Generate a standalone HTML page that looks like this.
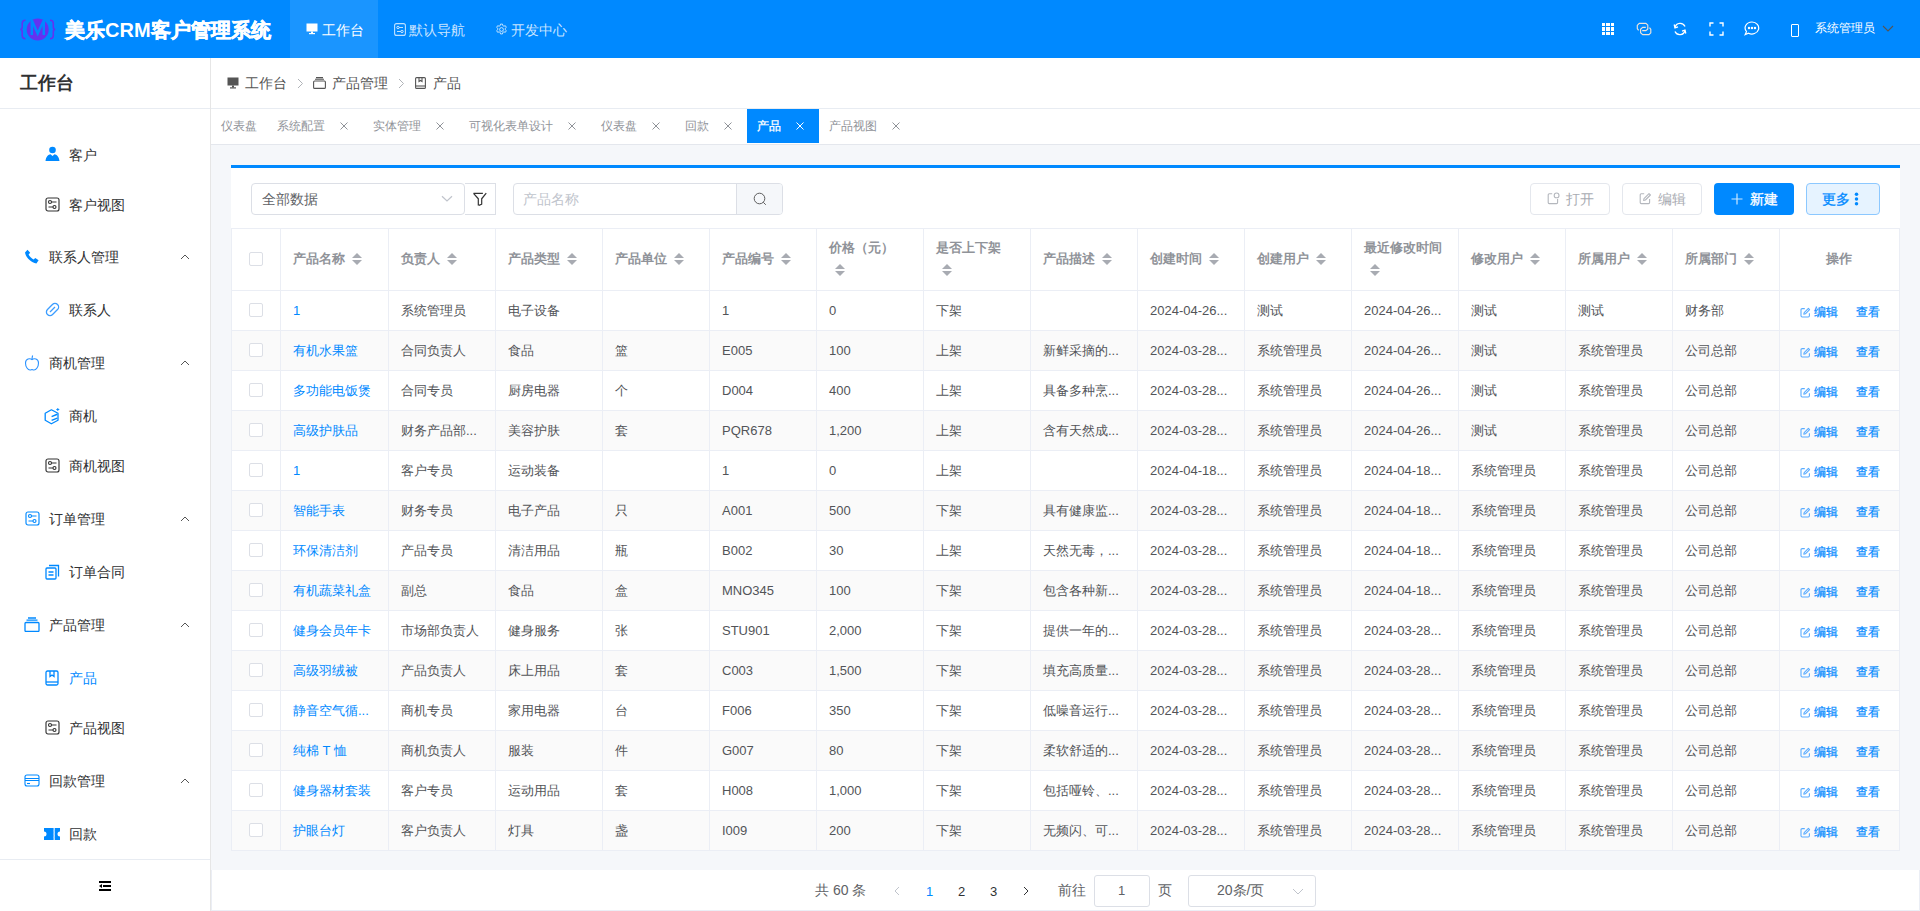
<!DOCTYPE html><html><head><meta charset="utf-8"><style>
*{box-sizing:border-box;margin:0;padding:0}
html,body{width:1920px;height:911px;overflow:hidden;background:#f5f7fa;font-family:"Liberation Sans",sans-serif;color:#606266}
.abs{position:absolute}
.t{position:absolute;white-space:nowrap;line-height:1}
#hdr{position:absolute;left:0;top:0;width:1920px;height:58px;background:#0089ff}
#side{position:absolute;left:0;top:58px;width:211px;height:853px;background:#fff;border-right:1px solid #e6e6e6}
.line{position:absolute;background:#ebeef5}
.sort{position:absolute;width:10px;height:14px}
.sort:before{content:"";position:absolute;left:0;top:0;border-left:5px solid transparent;border-right:5px solid transparent;border-bottom:5px solid #a8abb2}
.sort:after{content:"";position:absolute;left:0;top:7px;border-left:5px solid transparent;border-right:5px solid transparent;border-top:5px solid #a8abb2}
.cb{position:absolute;width:14px;height:14px;border:1px solid #dcdfe6;border-radius:2px;background:#fff}
</style></head><body>

<div id="hdr">
<svg class="abs" style="left:0;top:0" width="60" height="58" viewBox="0 0 60 58">
<circle cx="37.7" cy="29.5" r="11" fill="#6432f0"/>
<path d="M31.8 35V20.3L37.7 33.5L43.8 20.3V35" stroke="#0089ff" stroke-width="2.5" fill="none" stroke-linejoin="miter"/>
<path d="M25.5 20.2Q22.2 20.2 22.2 23.2V27.3Q22.2 29.5 20.2 29.5Q22.2 29.5 22.2 31.7V35.8Q22.2 38.7 25.5 38.7" stroke="#6432f0" stroke-width="1.6" fill="none"/>
<path d="M50 20.2Q53.3 20.2 53.3 23.2V27.3Q53.3 29.5 55.3 29.5Q53.3 29.5 53.3 31.7V35.8Q53.3 38.7 50 38.7" stroke="#6432f0" stroke-width="1.6" fill="none"/>
</svg>
<div class="t" style="left:65px;top:20px;font-size:20px;font-weight:bold;color:#fff"><span style="-webkit-text-stroke:0.6px #fff">美乐</span>CRM<span style="-webkit-text-stroke:0.6px #fff">客户管理系统</span></div>
<div class="abs" style="left:290px;top:0;width:88px;height:58px;background:rgba(255,255,255,.1)"></div>
<svg class="abs" style="left:306px;top:23px" width="12" height="12" viewBox="0 0 12 12"><rect x="0.5" y="0.5" width="11" height="8" fill="#fff"/><rect x="5" y="8.5" width="2" height="2" fill="#fff"/><rect x="3" y="10" width="6" height="1.2" fill="#fff"/></svg>
<div class="t" style="left:322px;top:23px;font-size:14px;color:#fff">工作台</div>
<svg class="abs" style="left:394px;top:23px" width="12" height="13" viewBox="0 0 12 13"><rect x="0.6" y="0.6" width="10.8" height="11.8" rx="2" fill="none" stroke="rgba(255,255,255,.75)" stroke-width="1.1"/><circle cx="4" cy="4.5" r="1.2" fill="none" stroke="rgba(255,255,255,.75)"/><circle cx="8" cy="8.5" r="1.2" fill="none" stroke="rgba(255,255,255,.75)"/><path d="M5.3 4.5H9M3 8.5H6.7" stroke="rgba(255,255,255,.75)"/></svg>
<div class="t" style="left:409px;top:23px;font-size:14px;color:rgba(255,255,255,.78)">默认导航</div>
<svg class="abs" style="left:495px;top:23px" width="13" height="13" viewBox="0 0 24 24"><path d="M12 8.5a3.5 3.5 0 1 0 0 7a3.5 3.5 0 0 0 0-7z M10.2 2h3.6l.6 2.8 2 1.1 2.7-.9 1.8 3.1-2.1 1.9v2.2l2.1 1.9-1.8 3.1-2.7-.9-2 1.1-.6 2.8h-3.6l-.6-2.8-2-1.1-2.7.9-1.8-3.1 2.1-1.9v-2.2L3.1 8.1l1.8-3.1 2.7.9 2-1.1z" fill="none" stroke="rgba(255,255,255,.75)" stroke-width="1.8" stroke-linejoin="round"/></svg>
<div class="t" style="left:511px;top:23px;font-size:14px;color:rgba(255,255,255,.78)">开发中心</div>
<svg class="abs" style="left:1602px;top:23px" width="12" height="12" viewBox="0 0 12 12" fill="#fff" shape-rendering="crispEdges"><rect x="0" y="0" width="3" height="3"/><rect x="4" y="0" width="4" height="3"/><rect x="9" y="0" width="3" height="3"/><rect x="0" y="4" width="3" height="4"/><rect x="4" y="4" width="4" height="4"/><rect x="9" y="4" width="3" height="4"/><rect x="0" y="9" width="3" height="3"/><rect x="4" y="9" width="4" height="3"/><rect x="9" y="9" width="3" height="3"/></svg>
<svg class="abs" style="left:1632px;top:18px" width="24" height="22" viewBox="0 0 24 22" fill="none" stroke="#ece4dc" stroke-width="1.15" stroke-linejoin="round"><path d="M6.6 12.4L5.3 10.6V7.3L7.2 5.4H14L15.8 7.2V11L14 12.6H10.2"/><path d="M13.8 9.4H10.6L8.6 11.2V14.8L10.6 16.6H17L18.8 14.8V11.3L17.5 9.6"/></svg>
<svg class="abs" style="left:1673px;top:22px" width="14" height="14" viewBox="0 0 14 14" fill="none" stroke="#fff" stroke-width="1.3"><path d="M2 5.5A5.3 5.3 0 0 1 12 4.5"/><path d="M12 8.5A5.3 5.3 0 0 1 2 9.5"/><path d="M1.2 2.5L2 5.8L5 4.8" /><path d="M12.8 11.5L12 8.2L9 9.2"/></svg>
<svg class="abs" style="left:1709px;top:22px" width="15" height="14" viewBox="0 0 15 14" fill="none" stroke="#fff" stroke-width="1.4"><path d="M1 4.5V1H4.5M10.5 1H14V4.5M14 9.5V13H10.5M4.5 13H1V9.5"/></svg>
<svg class="abs" style="left:1744px;top:21px" width="16" height="15" viewBox="0 0 16 15" fill="none" stroke="#fff" stroke-width="1.2"><path d="M8 1A6.8 6 0 1 1 4.5 12.2L1.2 13.6L2.5 10.6A6.8 6 0 0 1 8 1z"/><circle cx="5" cy="7" r=".6" fill="#fff"/><circle cx="8" cy="7" r=".6" fill="#fff"/><circle cx="11" cy="7" r=".6" fill="#fff"/></svg>
<div class="abs" style="left:1791px;top:24px;width:8px;height:13px;border:1.3px solid #fff;border-radius:1px"></div>
<div class="t" style="left:1815px;top:22px;font-size:12px;color:#fff">系统管理员</div>
<svg class="abs" style="left:1882px;top:25px" width="12" height="8" viewBox="0 0 12 8" fill="none" stroke="#555" stroke-width="1.1"><path d="M1 1L6 6L11 1"/></svg>
</div>
<div id="side">
<div class="t" style="left:20px;top:16px;font-size:18px;font-weight:bold;color:#303133">工作台</div>
<div class="abs" style="left:0;top:50px;width:210px;height:1px;background:#e8ecf2"></div>
<div class="abs" style="left:0;top:801px;width:210px;height:1px;background:#e8ecf2"></div>
<svg class="abs" style="left:99px;top:823px" width="12" height="10" viewBox="0 0 12 10" fill="#000"><rect x="0" y="0" width="12" height="2"/><rect x="4" y="4" width="8" height="2"/><rect x="0" y="8" width="12" height="2"/><path d="M0 5L3 3V7z"/></svg>
</div>
<svg class="abs" style="left:45px;top:146px" width="15" height="15" viewBox="0 0 15 15" fill="#0089ff"><circle cx="7.5" cy="4" r="3.3"/><path d="M0.5 15C1 10.5 3.5 8.5 5.5 8.3L7.5 10L9.5 8.3C11.5 8.5 14 10.5 14.5 15z"/></svg>
<div class="t" style="left:69px;top:148px;font-size:14px;color:#303133">客户</div>
<svg class="abs" style="left:45px;top:197px" width="15" height="15" viewBox="0 0 15 15" fill="none" stroke="#333" stroke-width="1.15"><rect x="1" y="1" width="13" height="13" rx="2"/><circle cx="5" cy="5" r="1.5"/><circle cx="9.5" cy="10" r="1.5"/><path d="M6.5 5H11.5M3.5 10H8"/></svg>
<div class="t" style="left:69px;top:198px;font-size:14px;color:#303133">客户视图</div>
<svg class="abs" style="left:24px;top:249px" width="16" height="15" viewBox="0 0 16 15" fill="#0089ff"><path d="M1 3.5L3.5 0.8L6.2 3.7L4.6 5.6C5.6 7.6 7.4 9.4 9.6 10.6L11.3 8.9L14.6 11.3L12.4 14.5C7 13.5 1.8 8.6 1 3.5z"/></svg>
<div class="t" style="left:49px;top:250px;font-size:14px;color:#303133">联系人管理</div>
<svg class="abs" style="left:180px;top:254px" width="10" height="6" viewBox="0 0 10 6" fill="none" stroke="#555" stroke-width="1"><path d="M1 5L5 1L9 5"/></svg>
<svg class="abs" style="left:45px;top:302px" width="15" height="15" viewBox="0 0 15 15" fill="none" stroke="#3c9dff" stroke-width="1.3"><rect x="0.4" y="3.9" width="14.2" height="7.2" rx="3.6" transform="rotate(-45 7.5 7.5)"/><path d="M5 10L10 5"/></svg>
<div class="t" style="left:69px;top:303px;font-size:14px;color:#303133">联系人</div>
<svg class="abs" style="left:24px;top:355px" width="16" height="16" viewBox="0 0 16 16" fill="none" stroke="#2a92ff" stroke-width="1.1"><path d="M8 4.5C6 3 1.5 3.5 1.5 8C1.5 12 4 15 6 15C7 15 7.3 14.6 8 14.6C8.7 14.6 9 15 10 15C12 15 14.5 12 14.5 8C14.5 3.5 10 3 8 4.5z"/><path d="M8 4.5C8 3 8.3 1.5 8.6 0.5"/></svg>
<div class="t" style="left:49px;top:356px;font-size:14px;color:#303133">商机管理</div>
<svg class="abs" style="left:180px;top:360px" width="10" height="6" viewBox="0 0 10 6" fill="none" stroke="#555" stroke-width="1"><path d="M1 5L5 1L9 5"/></svg>
<svg class="abs" style="left:44px;top:408px" width="17" height="17" viewBox="0 0 17 17" fill="none" stroke="#0089ff" stroke-width="1.3"><path d="M7.4 1.8L14 5.3V12.3L7.4 15.8L1.2 12.3V5.3z" stroke-linejoin="round"/><path d="M7.6 8.6L13.3 6.3M7.6 12.4L13.3 10.1" stroke-width="1.5"/><path d="M13.8 0V3M12.3 1.5H15.3" stroke-width="0.9"/></svg>
<div class="t" style="left:69px;top:409px;font-size:14px;color:#303133">商机</div>
<svg class="abs" style="left:45px;top:458px" width="15" height="15" viewBox="0 0 15 15" fill="none" stroke="#333" stroke-width="1.15"><rect x="1" y="1" width="13" height="13" rx="2"/><circle cx="5" cy="5" r="1.5"/><circle cx="9.5" cy="10" r="1.5"/><path d="M6.5 5H11.5M3.5 10H8"/></svg>
<div class="t" style="left:69px;top:459px;font-size:14px;color:#303133">商机视图</div>
<svg class="abs" style="left:25px;top:511px" width="15" height="15" viewBox="0 0 15 15" fill="none" stroke="#0089ff" stroke-width="1.15"><rect x="1" y="1" width="13" height="13" rx="2"/><circle cx="5" cy="5" r="1.5"/><circle cx="9.5" cy="10" r="1.5"/><path d="M6.5 5H11.5M3.5 10H8"/></svg>
<div class="t" style="left:49px;top:512px;font-size:14px;color:#303133">订单管理</div>
<svg class="abs" style="left:180px;top:516px" width="10" height="6" viewBox="0 0 10 6" fill="none" stroke="#555" stroke-width="1"><path d="M1 5L5 1L9 5"/></svg>
<svg class="abs" style="left:45px;top:564px" width="15" height="16" viewBox="0 0 15 16" fill="none" stroke="#0089ff" stroke-width="1.3"><rect x="1" y="4" width="10" height="11" rx="1"/><path d="M4 1.5H13.5V12.5"/><path d="M3.5 8H8.5M3.5 11H8.5"/></svg>
<div class="t" style="left:69px;top:565px;font-size:14px;color:#303133">订单合同</div>
<svg class="abs" style="left:24px;top:617px" width="16" height="15" viewBox="0 0 16 15" fill="none" stroke="#0089ff" stroke-width="1.3"><rect x="1" y="5.5" width="14" height="9" rx="1"/><path d="M2.5 3.2H13.5M4 1H12"/></svg>
<div class="t" style="left:49px;top:618px;font-size:14px;color:#303133">产品管理</div>
<svg class="abs" style="left:180px;top:622px" width="10" height="6" viewBox="0 0 10 6" fill="none" stroke="#555" stroke-width="1"><path d="M1 5L5 1L9 5"/></svg>
<svg class="abs" style="left:45px;top:670px" width="14" height="16" viewBox="0 0 14 16" fill="none" stroke="#0089ff" stroke-width="1.3"><rect x="1" y="1" width="12" height="14" rx="1.5"/><path d="M1 12H13"/><path d="M5 1V6.5L7 5L9 6.5V1"/></svg>
<div class="t" style="left:69px;top:671px;font-size:14px;color:#0089ff">产品</div>
<svg class="abs" style="left:45px;top:720px" width="15" height="15" viewBox="0 0 15 15" fill="none" stroke="#333" stroke-width="1.15"><rect x="1" y="1" width="13" height="13" rx="2"/><circle cx="5" cy="5" r="1.5"/><circle cx="9.5" cy="10" r="1.5"/><path d="M6.5 5H11.5M3.5 10H8"/></svg>
<div class="t" style="left:69px;top:721px;font-size:14px;color:#303133">产品视图</div>
<svg class="abs" style="left:24px;top:774px" width="16" height="13" viewBox="0 0 16 13" fill="none" stroke="#0089ff" stroke-width="1.1"><rect x="1" y="1" width="14" height="11" rx="2"/><path d="M1 4.5H15M1 6.5H15"/><path d="M3 9.5H6"/></svg>
<div class="t" style="left:49px;top:774px;font-size:14px;color:#303133">回款管理</div>
<svg class="abs" style="left:180px;top:778px" width="10" height="6" viewBox="0 0 10 6" fill="none" stroke="#555" stroke-width="1"><path d="M1 5L5 1L9 5"/></svg>
<svg class="abs" style="left:44px;top:828px" width="16" height="12" viewBox="0 0 16 12" fill="#0089ff"><path d="M0 0H16V3.5A2.5 2.5 0 0 0 16 8.5V12H0V8.5A2.5 2.5 0 0 0 0 3.5z"/><rect x="9.6" y="0" width="1.1" height="12" fill="#fff"/><rect x="9.6" y="2" width="1.1" height="1.5" fill="#9ccfff"/><rect x="9.6" y="5.3" width="1.1" height="1.5" fill="#9ccfff"/><rect x="9.6" y="8.6" width="1.1" height="1.5" fill="#9ccfff"/></svg>
<div class="t" style="left:69px;top:827px;font-size:14px;color:#303133">回款</div>
<div class="abs" style="left:211px;top:58px;width:1709px;height:51px;background:#fff;border-bottom:1px solid #e8ecf2"></div>
<svg class="abs" style="left:227px;top:77px" width="12" height="12" viewBox="0 0 12 12" fill="#555"><rect x="0.5" y="0.5" width="11" height="8"/><rect x="5" y="8.5" width="2" height="2"/><rect x="3" y="10.3" width="6" height="1.2"/></svg>
<div class="t" style="left:245px;top:76px;font-size:14px;color:#555">工作台</div>
<svg class="abs" style="left:297px;top:78px" width="7" height="11" viewBox="0 0 7 11" fill="none" stroke="#b0b3b8" stroke-width="1"><path d="M1 1L5.5 5.5L1 10"/></svg>
<svg class="abs" style="left:313px;top:77px" width="13" height="12" viewBox="0 0 13 12" fill="none" stroke="#555" stroke-width="1.1"><rect x="0.6" y="4" width="11.8" height="7.4" rx="1"/><path d="M2 2.2H11M3 0.6H10"/></svg>
<div class="t" style="left:332px;top:76px;font-size:14px;color:#555">产品管理</div>
<svg class="abs" style="left:398px;top:78px" width="7" height="11" viewBox="0 0 7 11" fill="none" stroke="#b0b3b8" stroke-width="1"><path d="M1 1L5.5 5.5L1 10"/></svg>
<svg class="abs" style="left:415px;top:77px" width="11" height="12" viewBox="0 0 11 12" fill="none" stroke="#555" stroke-width="1.1"><rect x="0.6" y="0.6" width="9.8" height="10.8" rx="1"/><path d="M0.6 9H10.4"/><path d="M4 0.6V4.5L5.5 3.5L7 4.5V0.6"/></svg>
<div class="t" style="left:433px;top:76px;font-size:14px;color:#555">产品</div>
<div class="abs" style="left:211px;top:109px;width:1709px;height:36px;background:#fff;border-bottom:1px solid #e4e7ed"></div>
<div class="abs" style="left:747px;top:109px;width:72px;height:34px;background:#0089ff"></div>
<div class="t" style="left:221px;top:120px;font-size:12px;color:#909399">仪表盘</div>
<div class="t" style="left:277px;top:120px;font-size:12px;color:#909399">系统配置</div>
<svg class="abs" style="left:340px;top:122px" width="8" height="8" viewBox="0 0 8 8" fill="none" stroke="#909399" stroke-width="1"><path d="M0.5 0.5L7.5 7.5M7.5 0.5L0.5 7.5"/></svg>
<div class="t" style="left:373px;top:120px;font-size:12px;color:#909399">实体管理</div>
<svg class="abs" style="left:436px;top:122px" width="8" height="8" viewBox="0 0 8 8" fill="none" stroke="#909399" stroke-width="1"><path d="M0.5 0.5L7.5 7.5M7.5 0.5L0.5 7.5"/></svg>
<div class="t" style="left:469px;top:120px;font-size:12px;color:#909399">可视化表单设计</div>
<svg class="abs" style="left:568px;top:122px" width="8" height="8" viewBox="0 0 8 8" fill="none" stroke="#909399" stroke-width="1"><path d="M0.5 0.5L7.5 7.5M7.5 0.5L0.5 7.5"/></svg>
<div class="t" style="left:601px;top:120px;font-size:12px;color:#909399">仪表盘</div>
<svg class="abs" style="left:652px;top:122px" width="8" height="8" viewBox="0 0 8 8" fill="none" stroke="#909399" stroke-width="1"><path d="M0.5 0.5L7.5 7.5M7.5 0.5L0.5 7.5"/></svg>
<div class="t" style="left:685px;top:120px;font-size:12px;color:#909399">回款</div>
<svg class="abs" style="left:724px;top:122px" width="8" height="8" viewBox="0 0 8 8" fill="none" stroke="#909399" stroke-width="1"><path d="M0.5 0.5L7.5 7.5M7.5 0.5L0.5 7.5"/></svg>
<div class="t" style="left:757px;top:120px;font-size:12px;color:#fff;-webkit-text-stroke:0.3px #fff">产品</div>
<svg class="abs" style="left:796px;top:122px" width="8" height="8" viewBox="0 0 8 8" fill="none" stroke="#fff" stroke-width="1"><path d="M0.5 0.5L7.5 7.5M7.5 0.5L0.5 7.5"/></svg>
<div class="t" style="left:829px;top:120px;font-size:12px;color:#909399">产品视图</div>
<svg class="abs" style="left:892px;top:122px" width="8" height="8" viewBox="0 0 8 8" fill="none" stroke="#909399" stroke-width="1"><path d="M0.5 0.5L7.5 7.5M7.5 0.5L0.5 7.5"/></svg>
<div class="abs" style="left:231px;top:165px;width:1669px;height:686px;background:#fff;border-top:3px solid #0089ff"></div>
<div class="abs" style="left:251px;top:183px;width:214px;height:32px;border:1px solid #dcdfe6;border-radius:4px;background:#fff"></div>
<div class="t" style="left:262px;top:192px;font-size:14px;color:#606266">全部数据</div>
<svg class="abs" style="left:441px;top:195px" width="12" height="8" viewBox="0 0 12 8" fill="none" stroke="#c0c4cc" stroke-width="1.2"><path d="M1 1.2L6 6L11 1.2"/></svg>
<div class="abs" style="left:465px;top:183px;width:31px;height:32px;border:1px solid #dcdfe6;border-left:none;background:#fff"></div>
<svg class="abs" style="left:472px;top:192px" width="16" height="16" viewBox="0 0 16 16" fill="none" stroke="#333" stroke-width="1.2" stroke-linejoin="round"><path d="M1.5 1.3H10.9M14.25 1.1L9.7 6.75V12.2L6.75 13.4M1.5 1.3L6.3 6.75V13.4"/></svg>
<div class="abs" style="left:513px;top:183px;width:270px;height:32px;border:1px solid #dcdfe6;border-radius:4px;background:#fff"></div>
<div class="abs" style="left:736px;top:184px;width:46px;height:30px;border-left:1px solid #dcdfe6;background:#f5f7fa;border-radius:0 3px 3px 0"></div>
<div class="t" style="left:523px;top:192px;font-size:14px;color:#c0c4cc">产品名称</div>
<svg class="abs" style="left:753px;top:192px" width="14" height="14" viewBox="0 0 14 14" fill="none" stroke="#555" stroke-width="0.95"><circle cx="6.5" cy="6.5" r="5.3"/><path d="M10.3 10.3L12.8 12.8"/></svg>
<div class="abs" style="left:1530px;top:183px;width:80px;height:32px;border:1px solid #e4e7ed;border-radius:4px;background:#fff"></div>
<svg class="abs" style="left:1547px;top:192px" width="13" height="13" viewBox="0 0 13 13" fill="none" stroke="#b4b7bd" stroke-width="1.1"><path d="M5.2 1.8H2.2Q1.2 1.8 1.2 2.8V10.6Q1.2 11.6 2.2 11.6H9.6Q10.6 11.6 10.6 10.6V7"/><circle cx="9.6" cy="3.4" r="2.4"/></svg>
<div class="t" style="left:1566px;top:192px;font-size:14px;color:#a8abb2">打开</div>
<div class="abs" style="left:1622px;top:183px;width:80px;height:32px;border:1px solid #e4e7ed;border-radius:4px;background:#fff"></div>
<svg class="abs" style="left:1639px;top:192px" width="13" height="13" viewBox="0 0 13 13" fill="none" stroke="#b4b7bd" stroke-width="1.1"><path d="M5.2 1.8H2.2Q1.2 1.8 1.2 2.8V10.6Q1.2 11.6 2.2 11.6H9.6Q10.6 11.6 10.6 10.6V7"/><path d="M4.6 8.4L5 6.6L10 1.6L11.4 3L6.4 8z" stroke-linejoin="round"/></svg>
<div class="t" style="left:1658px;top:192px;font-size:14px;color:#a8abb2">编辑</div>
<div class="abs" style="left:1714px;top:183px;width:80px;height:32px;border-radius:4px;background:#0089ff"></div>
<svg class="abs" style="left:1731px;top:193px" width="12" height="12" viewBox="0 0 12 12" fill="none" stroke="rgba(255,255,255,.8)" stroke-width="1.2"><path d="M6 0.5V11.5M0.5 6H11.5"/></svg>
<div class="t" style="left:1750px;top:192px;font-size:14px;color:#fff;-webkit-text-stroke:0.35px #fff">新建</div>
<div class="abs" style="left:1806px;top:183px;width:74px;height:32px;border:1px solid #8cc8ff;border-radius:4px;background:#e6f3ff"></div>
<div class="t" style="left:1822px;top:192px;font-size:14px;color:#0089ff;-webkit-text-stroke:0.3px #0089ff">更多</div>
<svg class="abs" style="left:1854px;top:192px" width="5" height="14" viewBox="0 0 5 14" fill="#0089ff"><circle cx="2.5" cy="2.3" r="1.75"/><circle cx="2.5" cy="7" r="1.75"/><circle cx="2.5" cy="11.7" r="1.75"/></svg>
<div class="abs" style="left:232px;top:291px;width:1667px;height:39px;background:#fff"></div>
<div class="abs" style="left:232px;top:331px;width:1667px;height:39px;background:#fafafa"></div>
<div class="abs" style="left:232px;top:371px;width:1667px;height:39px;background:#fff"></div>
<div class="abs" style="left:232px;top:411px;width:1667px;height:39px;background:#fafafa"></div>
<div class="abs" style="left:232px;top:451px;width:1667px;height:39px;background:#fff"></div>
<div class="abs" style="left:232px;top:491px;width:1667px;height:39px;background:#fafafa"></div>
<div class="abs" style="left:232px;top:531px;width:1667px;height:39px;background:#fff"></div>
<div class="abs" style="left:232px;top:571px;width:1667px;height:39px;background:#fafafa"></div>
<div class="abs" style="left:232px;top:611px;width:1667px;height:39px;background:#fff"></div>
<div class="abs" style="left:232px;top:651px;width:1667px;height:39px;background:#fafafa"></div>
<div class="abs" style="left:232px;top:691px;width:1667px;height:39px;background:#fff"></div>
<div class="abs" style="left:232px;top:731px;width:1667px;height:39px;background:#fafafa"></div>
<div class="abs" style="left:232px;top:771px;width:1667px;height:39px;background:#fff"></div>
<div class="abs" style="left:232px;top:811px;width:1667px;height:39px;background:#fafafa"></div>
<div class="line" style="left:231px;top:228px;width:1669px;height:1px"></div>
<div class="line" style="left:231px;top:290px;width:1669px;height:1px"></div>
<div class="line" style="left:231px;top:330px;width:1669px;height:1px"></div>
<div class="line" style="left:231px;top:370px;width:1669px;height:1px"></div>
<div class="line" style="left:231px;top:410px;width:1669px;height:1px"></div>
<div class="line" style="left:231px;top:450px;width:1669px;height:1px"></div>
<div class="line" style="left:231px;top:490px;width:1669px;height:1px"></div>
<div class="line" style="left:231px;top:530px;width:1669px;height:1px"></div>
<div class="line" style="left:231px;top:570px;width:1669px;height:1px"></div>
<div class="line" style="left:231px;top:610px;width:1669px;height:1px"></div>
<div class="line" style="left:231px;top:650px;width:1669px;height:1px"></div>
<div class="line" style="left:231px;top:690px;width:1669px;height:1px"></div>
<div class="line" style="left:231px;top:730px;width:1669px;height:1px"></div>
<div class="line" style="left:231px;top:770px;width:1669px;height:1px"></div>
<div class="line" style="left:231px;top:810px;width:1669px;height:1px"></div>
<div class="line" style="left:231px;top:850px;width:1669px;height:1px"></div>
<div class="line" style="left:231px;top:228px;width:1px;height:623px"></div>
<div class="line" style="left:280px;top:228px;width:1px;height:623px"></div>
<div class="line" style="left:388px;top:228px;width:1px;height:623px"></div>
<div class="line" style="left:495px;top:228px;width:1px;height:623px"></div>
<div class="line" style="left:602px;top:228px;width:1px;height:623px"></div>
<div class="line" style="left:709px;top:228px;width:1px;height:623px"></div>
<div class="line" style="left:816px;top:228px;width:1px;height:623px"></div>
<div class="line" style="left:923px;top:228px;width:1px;height:623px"></div>
<div class="line" style="left:1030px;top:228px;width:1px;height:623px"></div>
<div class="line" style="left:1137px;top:228px;width:1px;height:623px"></div>
<div class="line" style="left:1244px;top:228px;width:1px;height:623px"></div>
<div class="line" style="left:1351px;top:228px;width:1px;height:623px"></div>
<div class="line" style="left:1458px;top:228px;width:1px;height:623px"></div>
<div class="line" style="left:1565px;top:228px;width:1px;height:623px"></div>
<div class="line" style="left:1672px;top:228px;width:1px;height:623px"></div>
<div class="line" style="left:1779px;top:228px;width:1px;height:623px"></div>
<div class="line" style="left:1899px;top:228px;width:1px;height:623px"></div>
<div class="cb" style="left:249px;top:252px"></div>
<div class="t" style="left:293px;top:252px;font-size:13px;font-weight:bold;color:#909399">产品名称</div>
<i class="sort" style="left:352px;top:253px"></i>
<div class="t" style="left:401px;top:252px;font-size:13px;font-weight:bold;color:#909399">负责人</div>
<i class="sort" style="left:447px;top:253px"></i>
<div class="t" style="left:508px;top:252px;font-size:13px;font-weight:bold;color:#909399">产品类型</div>
<i class="sort" style="left:567px;top:253px"></i>
<div class="t" style="left:615px;top:252px;font-size:13px;font-weight:bold;color:#909399">产品单位</div>
<i class="sort" style="left:674px;top:253px"></i>
<div class="t" style="left:722px;top:252px;font-size:13px;font-weight:bold;color:#909399">产品编号</div>
<i class="sort" style="left:781px;top:253px"></i>
<div class="t" style="left:829px;top:241px;font-size:13px;font-weight:bold;color:#909399">价格（元）</div>
<i class="sort" style="left:835px;top:264px"></i>
<div class="t" style="left:936px;top:241px;font-size:13px;font-weight:bold;color:#909399">是否上下架</div>
<i class="sort" style="left:942px;top:264px"></i>
<div class="t" style="left:1043px;top:252px;font-size:13px;font-weight:bold;color:#909399">产品描述</div>
<i class="sort" style="left:1102px;top:253px"></i>
<div class="t" style="left:1150px;top:252px;font-size:13px;font-weight:bold;color:#909399">创建时间</div>
<i class="sort" style="left:1209px;top:253px"></i>
<div class="t" style="left:1257px;top:252px;font-size:13px;font-weight:bold;color:#909399">创建用户</div>
<i class="sort" style="left:1316px;top:253px"></i>
<div class="t" style="left:1364px;top:241px;font-size:13px;font-weight:bold;color:#909399">最近修改时间</div>
<i class="sort" style="left:1370px;top:264px"></i>
<div class="t" style="left:1471px;top:252px;font-size:13px;font-weight:bold;color:#909399">修改用户</div>
<i class="sort" style="left:1530px;top:253px"></i>
<div class="t" style="left:1578px;top:252px;font-size:13px;font-weight:bold;color:#909399">所属用户</div>
<i class="sort" style="left:1637px;top:253px"></i>
<div class="t" style="left:1685px;top:252px;font-size:13px;font-weight:bold;color:#909399">所属部门</div>
<i class="sort" style="left:1744px;top:253px"></i>
<div class="t" style="left:1826px;top:252px;font-size:13px;font-weight:bold;color:#909399">操作</div>
<div class="cb" style="left:249px;top:303px"></div>
<div class="t" style="left:293px;top:304px;font-size:13px;color:#0089ff">1</div>
<div class="t" style="left:401px;top:304px;font-size:13px;color:#525458">系统管理员</div>
<div class="t" style="left:508px;top:304px;font-size:13px;color:#525458">电子设备</div>
<div class="t" style="left:722px;top:304px;font-size:13px;color:#525458">1</div>
<div class="t" style="left:829px;top:304px;font-size:13px;color:#525458">0</div>
<div class="t" style="left:936px;top:304px;font-size:13px;color:#525458">下架</div>
<div class="t" style="left:1150px;top:304px;font-size:13px;color:#525458">2024-04-26...</div>
<div class="t" style="left:1257px;top:304px;font-size:13px;color:#525458">测试</div>
<div class="t" style="left:1364px;top:304px;font-size:13px;color:#525458">2024-04-26...</div>
<div class="t" style="left:1471px;top:304px;font-size:13px;color:#525458">测试</div>
<div class="t" style="left:1578px;top:304px;font-size:13px;color:#525458">测试</div>
<div class="t" style="left:1685px;top:304px;font-size:13px;color:#525458">财务部</div>
<svg class="abs" style="left:1800px;top:307px" width="11" height="11" viewBox="0 0 11 11" fill="none" stroke="#5aacff" stroke-width="1.1"><path d="M4.8 1.6H2.2Q1 1.6 1 2.8V8.8Q1 10 2.2 10H8.2Q9.4 10 9.4 8.8V6.2"/><path d="M3.8 7.2L4.2 5.6L8.4 1.4L9.6 2.6L5.4 6.8z" stroke-linejoin="round"/></svg>
<div class="t" style="left:1814px;top:306px;font-size:12px;color:#0089ff;-webkit-text-stroke:0.2px #0089ff">编辑</div>
<div class="t" style="left:1856px;top:306px;font-size:12px;color:#0089ff;-webkit-text-stroke:0.2px #0089ff">查看</div>
<div class="cb" style="left:249px;top:343px"></div>
<div class="t" style="left:293px;top:344px;font-size:13px;color:#0089ff">有机水果篮</div>
<div class="t" style="left:401px;top:344px;font-size:13px;color:#525458">合同负责人</div>
<div class="t" style="left:508px;top:344px;font-size:13px;color:#525458">食品</div>
<div class="t" style="left:615px;top:344px;font-size:13px;color:#525458">篮</div>
<div class="t" style="left:722px;top:344px;font-size:13px;color:#525458">E005</div>
<div class="t" style="left:829px;top:344px;font-size:13px;color:#525458">100</div>
<div class="t" style="left:936px;top:344px;font-size:13px;color:#525458">上架</div>
<div class="t" style="left:1043px;top:344px;font-size:13px;color:#525458">新鲜采摘的...</div>
<div class="t" style="left:1150px;top:344px;font-size:13px;color:#525458">2024-03-28...</div>
<div class="t" style="left:1257px;top:344px;font-size:13px;color:#525458">系统管理员</div>
<div class="t" style="left:1364px;top:344px;font-size:13px;color:#525458">2024-04-26...</div>
<div class="t" style="left:1471px;top:344px;font-size:13px;color:#525458">测试</div>
<div class="t" style="left:1578px;top:344px;font-size:13px;color:#525458">系统管理员</div>
<div class="t" style="left:1685px;top:344px;font-size:13px;color:#525458">公司总部</div>
<svg class="abs" style="left:1800px;top:347px" width="11" height="11" viewBox="0 0 11 11" fill="none" stroke="#5aacff" stroke-width="1.1"><path d="M4.8 1.6H2.2Q1 1.6 1 2.8V8.8Q1 10 2.2 10H8.2Q9.4 10 9.4 8.8V6.2"/><path d="M3.8 7.2L4.2 5.6L8.4 1.4L9.6 2.6L5.4 6.8z" stroke-linejoin="round"/></svg>
<div class="t" style="left:1814px;top:346px;font-size:12px;color:#0089ff;-webkit-text-stroke:0.2px #0089ff">编辑</div>
<div class="t" style="left:1856px;top:346px;font-size:12px;color:#0089ff;-webkit-text-stroke:0.2px #0089ff">查看</div>
<div class="cb" style="left:249px;top:383px"></div>
<div class="t" style="left:293px;top:384px;font-size:13px;color:#0089ff">多功能电饭煲</div>
<div class="t" style="left:401px;top:384px;font-size:13px;color:#525458">合同专员</div>
<div class="t" style="left:508px;top:384px;font-size:13px;color:#525458">厨房电器</div>
<div class="t" style="left:615px;top:384px;font-size:13px;color:#525458">个</div>
<div class="t" style="left:722px;top:384px;font-size:13px;color:#525458">D004</div>
<div class="t" style="left:829px;top:384px;font-size:13px;color:#525458">400</div>
<div class="t" style="left:936px;top:384px;font-size:13px;color:#525458">上架</div>
<div class="t" style="left:1043px;top:384px;font-size:13px;color:#525458">具备多种烹...</div>
<div class="t" style="left:1150px;top:384px;font-size:13px;color:#525458">2024-03-28...</div>
<div class="t" style="left:1257px;top:384px;font-size:13px;color:#525458">系统管理员</div>
<div class="t" style="left:1364px;top:384px;font-size:13px;color:#525458">2024-04-26...</div>
<div class="t" style="left:1471px;top:384px;font-size:13px;color:#525458">测试</div>
<div class="t" style="left:1578px;top:384px;font-size:13px;color:#525458">系统管理员</div>
<div class="t" style="left:1685px;top:384px;font-size:13px;color:#525458">公司总部</div>
<svg class="abs" style="left:1800px;top:387px" width="11" height="11" viewBox="0 0 11 11" fill="none" stroke="#5aacff" stroke-width="1.1"><path d="M4.8 1.6H2.2Q1 1.6 1 2.8V8.8Q1 10 2.2 10H8.2Q9.4 10 9.4 8.8V6.2"/><path d="M3.8 7.2L4.2 5.6L8.4 1.4L9.6 2.6L5.4 6.8z" stroke-linejoin="round"/></svg>
<div class="t" style="left:1814px;top:386px;font-size:12px;color:#0089ff;-webkit-text-stroke:0.2px #0089ff">编辑</div>
<div class="t" style="left:1856px;top:386px;font-size:12px;color:#0089ff;-webkit-text-stroke:0.2px #0089ff">查看</div>
<div class="cb" style="left:249px;top:423px"></div>
<div class="t" style="left:293px;top:424px;font-size:13px;color:#0089ff">高级护肤品</div>
<div class="t" style="left:401px;top:424px;font-size:13px;color:#525458">财务产品部...</div>
<div class="t" style="left:508px;top:424px;font-size:13px;color:#525458">美容护肤</div>
<div class="t" style="left:615px;top:424px;font-size:13px;color:#525458">套</div>
<div class="t" style="left:722px;top:424px;font-size:13px;color:#525458">PQR678</div>
<div class="t" style="left:829px;top:424px;font-size:13px;color:#525458">1,200</div>
<div class="t" style="left:936px;top:424px;font-size:13px;color:#525458">上架</div>
<div class="t" style="left:1043px;top:424px;font-size:13px;color:#525458">含有天然成...</div>
<div class="t" style="left:1150px;top:424px;font-size:13px;color:#525458">2024-03-28...</div>
<div class="t" style="left:1257px;top:424px;font-size:13px;color:#525458">系统管理员</div>
<div class="t" style="left:1364px;top:424px;font-size:13px;color:#525458">2024-04-26...</div>
<div class="t" style="left:1471px;top:424px;font-size:13px;color:#525458">测试</div>
<div class="t" style="left:1578px;top:424px;font-size:13px;color:#525458">系统管理员</div>
<div class="t" style="left:1685px;top:424px;font-size:13px;color:#525458">公司总部</div>
<svg class="abs" style="left:1800px;top:427px" width="11" height="11" viewBox="0 0 11 11" fill="none" stroke="#5aacff" stroke-width="1.1"><path d="M4.8 1.6H2.2Q1 1.6 1 2.8V8.8Q1 10 2.2 10H8.2Q9.4 10 9.4 8.8V6.2"/><path d="M3.8 7.2L4.2 5.6L8.4 1.4L9.6 2.6L5.4 6.8z" stroke-linejoin="round"/></svg>
<div class="t" style="left:1814px;top:426px;font-size:12px;color:#0089ff;-webkit-text-stroke:0.2px #0089ff">编辑</div>
<div class="t" style="left:1856px;top:426px;font-size:12px;color:#0089ff;-webkit-text-stroke:0.2px #0089ff">查看</div>
<div class="cb" style="left:249px;top:463px"></div>
<div class="t" style="left:293px;top:464px;font-size:13px;color:#0089ff">1</div>
<div class="t" style="left:401px;top:464px;font-size:13px;color:#525458">客户专员</div>
<div class="t" style="left:508px;top:464px;font-size:13px;color:#525458">运动装备</div>
<div class="t" style="left:722px;top:464px;font-size:13px;color:#525458">1</div>
<div class="t" style="left:829px;top:464px;font-size:13px;color:#525458">0</div>
<div class="t" style="left:936px;top:464px;font-size:13px;color:#525458">上架</div>
<div class="t" style="left:1150px;top:464px;font-size:13px;color:#525458">2024-04-18...</div>
<div class="t" style="left:1257px;top:464px;font-size:13px;color:#525458">系统管理员</div>
<div class="t" style="left:1364px;top:464px;font-size:13px;color:#525458">2024-04-18...</div>
<div class="t" style="left:1471px;top:464px;font-size:13px;color:#525458">系统管理员</div>
<div class="t" style="left:1578px;top:464px;font-size:13px;color:#525458">系统管理员</div>
<div class="t" style="left:1685px;top:464px;font-size:13px;color:#525458">公司总部</div>
<svg class="abs" style="left:1800px;top:467px" width="11" height="11" viewBox="0 0 11 11" fill="none" stroke="#5aacff" stroke-width="1.1"><path d="M4.8 1.6H2.2Q1 1.6 1 2.8V8.8Q1 10 2.2 10H8.2Q9.4 10 9.4 8.8V6.2"/><path d="M3.8 7.2L4.2 5.6L8.4 1.4L9.6 2.6L5.4 6.8z" stroke-linejoin="round"/></svg>
<div class="t" style="left:1814px;top:466px;font-size:12px;color:#0089ff;-webkit-text-stroke:0.2px #0089ff">编辑</div>
<div class="t" style="left:1856px;top:466px;font-size:12px;color:#0089ff;-webkit-text-stroke:0.2px #0089ff">查看</div>
<div class="cb" style="left:249px;top:503px"></div>
<div class="t" style="left:293px;top:504px;font-size:13px;color:#0089ff">智能手表</div>
<div class="t" style="left:401px;top:504px;font-size:13px;color:#525458">财务专员</div>
<div class="t" style="left:508px;top:504px;font-size:13px;color:#525458">电子产品</div>
<div class="t" style="left:615px;top:504px;font-size:13px;color:#525458">只</div>
<div class="t" style="left:722px;top:504px;font-size:13px;color:#525458">A001</div>
<div class="t" style="left:829px;top:504px;font-size:13px;color:#525458">500</div>
<div class="t" style="left:936px;top:504px;font-size:13px;color:#525458">下架</div>
<div class="t" style="left:1043px;top:504px;font-size:13px;color:#525458">具有健康监...</div>
<div class="t" style="left:1150px;top:504px;font-size:13px;color:#525458">2024-03-28...</div>
<div class="t" style="left:1257px;top:504px;font-size:13px;color:#525458">系统管理员</div>
<div class="t" style="left:1364px;top:504px;font-size:13px;color:#525458">2024-04-18...</div>
<div class="t" style="left:1471px;top:504px;font-size:13px;color:#525458">系统管理员</div>
<div class="t" style="left:1578px;top:504px;font-size:13px;color:#525458">系统管理员</div>
<div class="t" style="left:1685px;top:504px;font-size:13px;color:#525458">公司总部</div>
<svg class="abs" style="left:1800px;top:507px" width="11" height="11" viewBox="0 0 11 11" fill="none" stroke="#5aacff" stroke-width="1.1"><path d="M4.8 1.6H2.2Q1 1.6 1 2.8V8.8Q1 10 2.2 10H8.2Q9.4 10 9.4 8.8V6.2"/><path d="M3.8 7.2L4.2 5.6L8.4 1.4L9.6 2.6L5.4 6.8z" stroke-linejoin="round"/></svg>
<div class="t" style="left:1814px;top:506px;font-size:12px;color:#0089ff;-webkit-text-stroke:0.2px #0089ff">编辑</div>
<div class="t" style="left:1856px;top:506px;font-size:12px;color:#0089ff;-webkit-text-stroke:0.2px #0089ff">查看</div>
<div class="cb" style="left:249px;top:543px"></div>
<div class="t" style="left:293px;top:544px;font-size:13px;color:#0089ff">环保清洁剂</div>
<div class="t" style="left:401px;top:544px;font-size:13px;color:#525458">产品专员</div>
<div class="t" style="left:508px;top:544px;font-size:13px;color:#525458">清洁用品</div>
<div class="t" style="left:615px;top:544px;font-size:13px;color:#525458">瓶</div>
<div class="t" style="left:722px;top:544px;font-size:13px;color:#525458">B002</div>
<div class="t" style="left:829px;top:544px;font-size:13px;color:#525458">30</div>
<div class="t" style="left:936px;top:544px;font-size:13px;color:#525458">上架</div>
<div class="t" style="left:1043px;top:544px;font-size:13px;color:#525458">天然无毒，...</div>
<div class="t" style="left:1150px;top:544px;font-size:13px;color:#525458">2024-03-28...</div>
<div class="t" style="left:1257px;top:544px;font-size:13px;color:#525458">系统管理员</div>
<div class="t" style="left:1364px;top:544px;font-size:13px;color:#525458">2024-04-18...</div>
<div class="t" style="left:1471px;top:544px;font-size:13px;color:#525458">系统管理员</div>
<div class="t" style="left:1578px;top:544px;font-size:13px;color:#525458">系统管理员</div>
<div class="t" style="left:1685px;top:544px;font-size:13px;color:#525458">公司总部</div>
<svg class="abs" style="left:1800px;top:547px" width="11" height="11" viewBox="0 0 11 11" fill="none" stroke="#5aacff" stroke-width="1.1"><path d="M4.8 1.6H2.2Q1 1.6 1 2.8V8.8Q1 10 2.2 10H8.2Q9.4 10 9.4 8.8V6.2"/><path d="M3.8 7.2L4.2 5.6L8.4 1.4L9.6 2.6L5.4 6.8z" stroke-linejoin="round"/></svg>
<div class="t" style="left:1814px;top:546px;font-size:12px;color:#0089ff;-webkit-text-stroke:0.2px #0089ff">编辑</div>
<div class="t" style="left:1856px;top:546px;font-size:12px;color:#0089ff;-webkit-text-stroke:0.2px #0089ff">查看</div>
<div class="cb" style="left:249px;top:583px"></div>
<div class="t" style="left:293px;top:584px;font-size:13px;color:#0089ff">有机蔬菜礼盒</div>
<div class="t" style="left:401px;top:584px;font-size:13px;color:#525458">副总</div>
<div class="t" style="left:508px;top:584px;font-size:13px;color:#525458">食品</div>
<div class="t" style="left:615px;top:584px;font-size:13px;color:#525458">盒</div>
<div class="t" style="left:722px;top:584px;font-size:13px;color:#525458">MNO345</div>
<div class="t" style="left:829px;top:584px;font-size:13px;color:#525458">100</div>
<div class="t" style="left:936px;top:584px;font-size:13px;color:#525458">下架</div>
<div class="t" style="left:1043px;top:584px;font-size:13px;color:#525458">包含各种新...</div>
<div class="t" style="left:1150px;top:584px;font-size:13px;color:#525458">2024-03-28...</div>
<div class="t" style="left:1257px;top:584px;font-size:13px;color:#525458">系统管理员</div>
<div class="t" style="left:1364px;top:584px;font-size:13px;color:#525458">2024-04-18...</div>
<div class="t" style="left:1471px;top:584px;font-size:13px;color:#525458">系统管理员</div>
<div class="t" style="left:1578px;top:584px;font-size:13px;color:#525458">系统管理员</div>
<div class="t" style="left:1685px;top:584px;font-size:13px;color:#525458">公司总部</div>
<svg class="abs" style="left:1800px;top:587px" width="11" height="11" viewBox="0 0 11 11" fill="none" stroke="#5aacff" stroke-width="1.1"><path d="M4.8 1.6H2.2Q1 1.6 1 2.8V8.8Q1 10 2.2 10H8.2Q9.4 10 9.4 8.8V6.2"/><path d="M3.8 7.2L4.2 5.6L8.4 1.4L9.6 2.6L5.4 6.8z" stroke-linejoin="round"/></svg>
<div class="t" style="left:1814px;top:586px;font-size:12px;color:#0089ff;-webkit-text-stroke:0.2px #0089ff">编辑</div>
<div class="t" style="left:1856px;top:586px;font-size:12px;color:#0089ff;-webkit-text-stroke:0.2px #0089ff">查看</div>
<div class="cb" style="left:249px;top:623px"></div>
<div class="t" style="left:293px;top:624px;font-size:13px;color:#0089ff">健身会员年卡</div>
<div class="t" style="left:401px;top:624px;font-size:13px;color:#525458">市场部负责人</div>
<div class="t" style="left:508px;top:624px;font-size:13px;color:#525458">健身服务</div>
<div class="t" style="left:615px;top:624px;font-size:13px;color:#525458">张</div>
<div class="t" style="left:722px;top:624px;font-size:13px;color:#525458">STU901</div>
<div class="t" style="left:829px;top:624px;font-size:13px;color:#525458">2,000</div>
<div class="t" style="left:936px;top:624px;font-size:13px;color:#525458">下架</div>
<div class="t" style="left:1043px;top:624px;font-size:13px;color:#525458">提供一年的...</div>
<div class="t" style="left:1150px;top:624px;font-size:13px;color:#525458">2024-03-28...</div>
<div class="t" style="left:1257px;top:624px;font-size:13px;color:#525458">系统管理员</div>
<div class="t" style="left:1364px;top:624px;font-size:13px;color:#525458">2024-03-28...</div>
<div class="t" style="left:1471px;top:624px;font-size:13px;color:#525458">系统管理员</div>
<div class="t" style="left:1578px;top:624px;font-size:13px;color:#525458">系统管理员</div>
<div class="t" style="left:1685px;top:624px;font-size:13px;color:#525458">公司总部</div>
<svg class="abs" style="left:1800px;top:627px" width="11" height="11" viewBox="0 0 11 11" fill="none" stroke="#5aacff" stroke-width="1.1"><path d="M4.8 1.6H2.2Q1 1.6 1 2.8V8.8Q1 10 2.2 10H8.2Q9.4 10 9.4 8.8V6.2"/><path d="M3.8 7.2L4.2 5.6L8.4 1.4L9.6 2.6L5.4 6.8z" stroke-linejoin="round"/></svg>
<div class="t" style="left:1814px;top:626px;font-size:12px;color:#0089ff;-webkit-text-stroke:0.2px #0089ff">编辑</div>
<div class="t" style="left:1856px;top:626px;font-size:12px;color:#0089ff;-webkit-text-stroke:0.2px #0089ff">查看</div>
<div class="cb" style="left:249px;top:663px"></div>
<div class="t" style="left:293px;top:664px;font-size:13px;color:#0089ff">高级羽绒被</div>
<div class="t" style="left:401px;top:664px;font-size:13px;color:#525458">产品负责人</div>
<div class="t" style="left:508px;top:664px;font-size:13px;color:#525458">床上用品</div>
<div class="t" style="left:615px;top:664px;font-size:13px;color:#525458">套</div>
<div class="t" style="left:722px;top:664px;font-size:13px;color:#525458">C003</div>
<div class="t" style="left:829px;top:664px;font-size:13px;color:#525458">1,500</div>
<div class="t" style="left:936px;top:664px;font-size:13px;color:#525458">下架</div>
<div class="t" style="left:1043px;top:664px;font-size:13px;color:#525458">填充高质量...</div>
<div class="t" style="left:1150px;top:664px;font-size:13px;color:#525458">2024-03-28...</div>
<div class="t" style="left:1257px;top:664px;font-size:13px;color:#525458">系统管理员</div>
<div class="t" style="left:1364px;top:664px;font-size:13px;color:#525458">2024-03-28...</div>
<div class="t" style="left:1471px;top:664px;font-size:13px;color:#525458">系统管理员</div>
<div class="t" style="left:1578px;top:664px;font-size:13px;color:#525458">系统管理员</div>
<div class="t" style="left:1685px;top:664px;font-size:13px;color:#525458">公司总部</div>
<svg class="abs" style="left:1800px;top:667px" width="11" height="11" viewBox="0 0 11 11" fill="none" stroke="#5aacff" stroke-width="1.1"><path d="M4.8 1.6H2.2Q1 1.6 1 2.8V8.8Q1 10 2.2 10H8.2Q9.4 10 9.4 8.8V6.2"/><path d="M3.8 7.2L4.2 5.6L8.4 1.4L9.6 2.6L5.4 6.8z" stroke-linejoin="round"/></svg>
<div class="t" style="left:1814px;top:666px;font-size:12px;color:#0089ff;-webkit-text-stroke:0.2px #0089ff">编辑</div>
<div class="t" style="left:1856px;top:666px;font-size:12px;color:#0089ff;-webkit-text-stroke:0.2px #0089ff">查看</div>
<div class="cb" style="left:249px;top:703px"></div>
<div class="t" style="left:293px;top:704px;font-size:13px;color:#0089ff">静音空气循...</div>
<div class="t" style="left:401px;top:704px;font-size:13px;color:#525458">商机专员</div>
<div class="t" style="left:508px;top:704px;font-size:13px;color:#525458">家用电器</div>
<div class="t" style="left:615px;top:704px;font-size:13px;color:#525458">台</div>
<div class="t" style="left:722px;top:704px;font-size:13px;color:#525458">F006</div>
<div class="t" style="left:829px;top:704px;font-size:13px;color:#525458">350</div>
<div class="t" style="left:936px;top:704px;font-size:13px;color:#525458">下架</div>
<div class="t" style="left:1043px;top:704px;font-size:13px;color:#525458">低噪音运行...</div>
<div class="t" style="left:1150px;top:704px;font-size:13px;color:#525458">2024-03-28...</div>
<div class="t" style="left:1257px;top:704px;font-size:13px;color:#525458">系统管理员</div>
<div class="t" style="left:1364px;top:704px;font-size:13px;color:#525458">2024-03-28...</div>
<div class="t" style="left:1471px;top:704px;font-size:13px;color:#525458">系统管理员</div>
<div class="t" style="left:1578px;top:704px;font-size:13px;color:#525458">系统管理员</div>
<div class="t" style="left:1685px;top:704px;font-size:13px;color:#525458">公司总部</div>
<svg class="abs" style="left:1800px;top:707px" width="11" height="11" viewBox="0 0 11 11" fill="none" stroke="#5aacff" stroke-width="1.1"><path d="M4.8 1.6H2.2Q1 1.6 1 2.8V8.8Q1 10 2.2 10H8.2Q9.4 10 9.4 8.8V6.2"/><path d="M3.8 7.2L4.2 5.6L8.4 1.4L9.6 2.6L5.4 6.8z" stroke-linejoin="round"/></svg>
<div class="t" style="left:1814px;top:706px;font-size:12px;color:#0089ff;-webkit-text-stroke:0.2px #0089ff">编辑</div>
<div class="t" style="left:1856px;top:706px;font-size:12px;color:#0089ff;-webkit-text-stroke:0.2px #0089ff">查看</div>
<div class="cb" style="left:249px;top:743px"></div>
<div class="t" style="left:293px;top:744px;font-size:13px;color:#0089ff">纯棉 T 恤</div>
<div class="t" style="left:401px;top:744px;font-size:13px;color:#525458">商机负责人</div>
<div class="t" style="left:508px;top:744px;font-size:13px;color:#525458">服装</div>
<div class="t" style="left:615px;top:744px;font-size:13px;color:#525458">件</div>
<div class="t" style="left:722px;top:744px;font-size:13px;color:#525458">G007</div>
<div class="t" style="left:829px;top:744px;font-size:13px;color:#525458">80</div>
<div class="t" style="left:936px;top:744px;font-size:13px;color:#525458">下架</div>
<div class="t" style="left:1043px;top:744px;font-size:13px;color:#525458">柔软舒适的...</div>
<div class="t" style="left:1150px;top:744px;font-size:13px;color:#525458">2024-03-28...</div>
<div class="t" style="left:1257px;top:744px;font-size:13px;color:#525458">系统管理员</div>
<div class="t" style="left:1364px;top:744px;font-size:13px;color:#525458">2024-03-28...</div>
<div class="t" style="left:1471px;top:744px;font-size:13px;color:#525458">系统管理员</div>
<div class="t" style="left:1578px;top:744px;font-size:13px;color:#525458">系统管理员</div>
<div class="t" style="left:1685px;top:744px;font-size:13px;color:#525458">公司总部</div>
<svg class="abs" style="left:1800px;top:747px" width="11" height="11" viewBox="0 0 11 11" fill="none" stroke="#5aacff" stroke-width="1.1"><path d="M4.8 1.6H2.2Q1 1.6 1 2.8V8.8Q1 10 2.2 10H8.2Q9.4 10 9.4 8.8V6.2"/><path d="M3.8 7.2L4.2 5.6L8.4 1.4L9.6 2.6L5.4 6.8z" stroke-linejoin="round"/></svg>
<div class="t" style="left:1814px;top:746px;font-size:12px;color:#0089ff;-webkit-text-stroke:0.2px #0089ff">编辑</div>
<div class="t" style="left:1856px;top:746px;font-size:12px;color:#0089ff;-webkit-text-stroke:0.2px #0089ff">查看</div>
<div class="cb" style="left:249px;top:783px"></div>
<div class="t" style="left:293px;top:784px;font-size:13px;color:#0089ff">健身器材套装</div>
<div class="t" style="left:401px;top:784px;font-size:13px;color:#525458">客户专员</div>
<div class="t" style="left:508px;top:784px;font-size:13px;color:#525458">运动用品</div>
<div class="t" style="left:615px;top:784px;font-size:13px;color:#525458">套</div>
<div class="t" style="left:722px;top:784px;font-size:13px;color:#525458">H008</div>
<div class="t" style="left:829px;top:784px;font-size:13px;color:#525458">1,000</div>
<div class="t" style="left:936px;top:784px;font-size:13px;color:#525458">下架</div>
<div class="t" style="left:1043px;top:784px;font-size:13px;color:#525458">包括哑铃、...</div>
<div class="t" style="left:1150px;top:784px;font-size:13px;color:#525458">2024-03-28...</div>
<div class="t" style="left:1257px;top:784px;font-size:13px;color:#525458">系统管理员</div>
<div class="t" style="left:1364px;top:784px;font-size:13px;color:#525458">2024-03-28...</div>
<div class="t" style="left:1471px;top:784px;font-size:13px;color:#525458">系统管理员</div>
<div class="t" style="left:1578px;top:784px;font-size:13px;color:#525458">系统管理员</div>
<div class="t" style="left:1685px;top:784px;font-size:13px;color:#525458">公司总部</div>
<svg class="abs" style="left:1800px;top:787px" width="11" height="11" viewBox="0 0 11 11" fill="none" stroke="#5aacff" stroke-width="1.1"><path d="M4.8 1.6H2.2Q1 1.6 1 2.8V8.8Q1 10 2.2 10H8.2Q9.4 10 9.4 8.8V6.2"/><path d="M3.8 7.2L4.2 5.6L8.4 1.4L9.6 2.6L5.4 6.8z" stroke-linejoin="round"/></svg>
<div class="t" style="left:1814px;top:786px;font-size:12px;color:#0089ff;-webkit-text-stroke:0.2px #0089ff">编辑</div>
<div class="t" style="left:1856px;top:786px;font-size:12px;color:#0089ff;-webkit-text-stroke:0.2px #0089ff">查看</div>
<div class="cb" style="left:249px;top:823px"></div>
<div class="t" style="left:293px;top:824px;font-size:13px;color:#0089ff">护眼台灯</div>
<div class="t" style="left:401px;top:824px;font-size:13px;color:#525458">客户负责人</div>
<div class="t" style="left:508px;top:824px;font-size:13px;color:#525458">灯具</div>
<div class="t" style="left:615px;top:824px;font-size:13px;color:#525458">盏</div>
<div class="t" style="left:722px;top:824px;font-size:13px;color:#525458">I009</div>
<div class="t" style="left:829px;top:824px;font-size:13px;color:#525458">200</div>
<div class="t" style="left:936px;top:824px;font-size:13px;color:#525458">下架</div>
<div class="t" style="left:1043px;top:824px;font-size:13px;color:#525458">无频闪、可...</div>
<div class="t" style="left:1150px;top:824px;font-size:13px;color:#525458">2024-03-28...</div>
<div class="t" style="left:1257px;top:824px;font-size:13px;color:#525458">系统管理员</div>
<div class="t" style="left:1364px;top:824px;font-size:13px;color:#525458">2024-03-28...</div>
<div class="t" style="left:1471px;top:824px;font-size:13px;color:#525458">系统管理员</div>
<div class="t" style="left:1578px;top:824px;font-size:13px;color:#525458">系统管理员</div>
<div class="t" style="left:1685px;top:824px;font-size:13px;color:#525458">公司总部</div>
<svg class="abs" style="left:1800px;top:827px" width="11" height="11" viewBox="0 0 11 11" fill="none" stroke="#5aacff" stroke-width="1.1"><path d="M4.8 1.6H2.2Q1 1.6 1 2.8V8.8Q1 10 2.2 10H8.2Q9.4 10 9.4 8.8V6.2"/><path d="M3.8 7.2L4.2 5.6L8.4 1.4L9.6 2.6L5.4 6.8z" stroke-linejoin="round"/></svg>
<div class="t" style="left:1814px;top:826px;font-size:12px;color:#0089ff;-webkit-text-stroke:0.2px #0089ff">编辑</div>
<div class="t" style="left:1856px;top:826px;font-size:12px;color:#0089ff;-webkit-text-stroke:0.2px #0089ff">查看</div>
<div class="abs" style="left:211px;top:870px;width:1709px;height:41px;background:#fff;border:1px solid #ebeef5;border-top:none"></div>
<div class="t" style="left:815px;top:883px;font-size:14px;color:#606266">共 60 条</div>
<svg class="abs" style="left:894px;top:886px" width="6" height="10" viewBox="0 0 6 10" fill="none" stroke="#c0c4cc" stroke-width="1"><path d="M5 1L1 5L5 9"/></svg>
<div class="t" style="left:926px;top:885px;font-size:13px;color:#0089ff">1</div>
<div class="t" style="left:958px;top:885px;font-size:13px;color:#303133">2</div>
<div class="t" style="left:990px;top:885px;font-size:13px;color:#303133">3</div>
<svg class="abs" style="left:1023px;top:886px" width="6" height="10" viewBox="0 0 6 10" fill="none" stroke="#303133" stroke-width="1"><path d="M1 1L5 5L1 9"/></svg>
<div class="t" style="left:1058px;top:883px;font-size:14px;color:#606266">前往</div>
<div class="abs" style="left:1094px;top:875px;width:56px;height:32px;border:1px solid #dcdfe6;border-radius:3px;background:#fff"></div>
<div class="t" style="left:1118px;top:884px;font-size:13px;color:#606266">1</div>
<div class="t" style="left:1158px;top:883px;font-size:14px;color:#606266">页</div>
<div class="abs" style="left:1188px;top:875px;width:128px;height:32px;border:1px solid #dcdfe6;border-radius:3px;background:#fff"></div>
<div class="t" style="left:1217px;top:883px;font-size:14px;color:#606266">20条/页</div>
<svg class="abs" style="left:1292px;top:888px" width="12" height="7" viewBox="0 0 12 7" fill="none" stroke="#c0c4cc" stroke-width="1"><path d="M1 1L6 6L11 1"/></svg>
</body></html>
